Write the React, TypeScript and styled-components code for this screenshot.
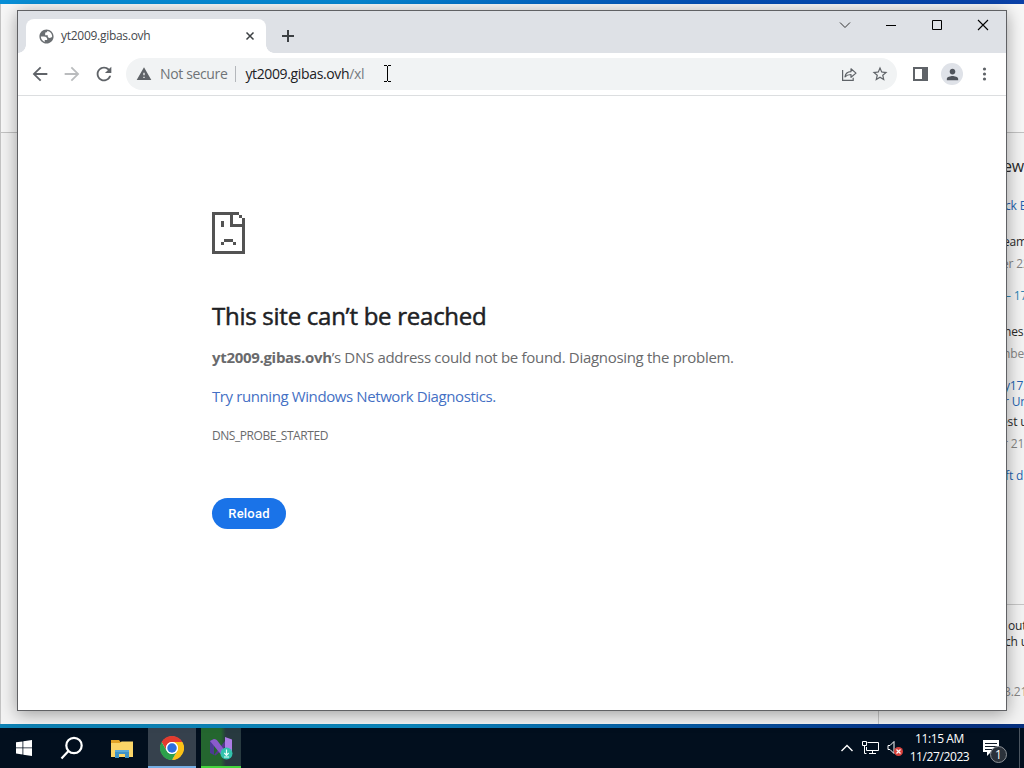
import React from 'react';
import styled, { createGlobalStyle } from 'styled-components';

const colors = {
  black: '#202124',
  grey: '#5f6368',
  textGrey: '#696a6c',
  link: '#4470c4',
  blue: '#1a73e8',
  frame: '#dee1e6',
  omnibox: '#f1f3f4',
  taskbar: '#020f1e',
};

const GlobalStyle = createGlobalStyle`
  * {
    box-sizing: border-box;
  }
  body {
    margin: 0;
    overflow: hidden;
    font-family: 'Open Sans', 'Noto Sans', sans-serif;
  }
  svg {
    display: block;
    flex-shrink: 0;
  }
`;

const Desktop = styled.div`
  position: relative;
  display: flex;
  flex-direction: column;
  width: 1024px;
  height: 768px;
  overflow: hidden;
`;

const TopEdge = styled.div`
  height: 4px;
  background: linear-gradient(90deg, #078ed6 0%, #0786d0 35%, #0468c2 52%, #0450b4 68%, #0a41a8 100%);
`;

const BottomEdge = styled.div`
  height: 4px;
  background: linear-gradient(90deg, #0e82b4 0%, #0c86bc 40%, #0655a0 70%, #07348a 88%, #06307e 100%);
`;

const BackWindow = styled.div`
  display: flex;
  flex: 1;
  flex-direction: column;
  min-height: 0;
  border-left: 1px solid #c4c4c4;
  background: #f3f3f3;
`;

const BackHeader = styled.div`
  height: 129px;
  border-bottom: 1px solid #c2c2c2;
  background: #f7f7f7;
`;

const BackBody = styled.div`
  display: flex;
  flex: 1;
  min-height: 0;
`;

const BackMain = styled.div`
  width: 878px;
  border-right: 1px solid #c6c6c6;
`;

const BackSide = styled.div`
  flex: 1;
  min-width: 0;
`;

const NewsItem = styled.div<{ gap: number; indent: number; tone: string; size?: number }>`
  height: 16px;
  margin-top: ${(props) => props.gap}px;
  padding-left: ${(props) => props.indent - 879}px;
  color: ${(props) => props.tone};
  font-size: ${(props) => props.size || 12}px;
  line-height: 16px;
  letter-spacing: -0.15px;
  white-space: nowrap;
`;

const NewsRule = styled.div`
  height: 1px;
  margin-top: 120px;
  background: #c6c6c6;
`;

const Browser = styled.div`
  position: absolute;
  top: 10px;
  left: 17px;
  display: flex;
  flex-direction: column;
  width: 990px;
  height: 701px;
  border: 1px solid #606164;
  background: #fff;
  box-shadow: 0 3px 16px rgba(0, 0, 0, 0.36);
`;

const TabStrip = styled.div`
  display: flex;
  height: 42px;
  padding: 8px 0 0 8px;
  background: ${colors.frame};
`;

const Tab = styled.div`
  position: relative;
  display: flex;
  align-items: center;
  width: 240px;
  height: 34px;
  padding: 0 11px 0 12px;
  border-radius: 8px 8px 0 0;
  background: #fff;

  &::before,
  &::after {
    content: '';
    position: absolute;
    bottom: 0;
    width: 8px;
    height: 8px;
  }
  &::before {
    left: -8px;
    background: radial-gradient(circle at 0 0, transparent 7.5px, #fff 8px);
  }
  &::after {
    right: -8px;
    background: radial-gradient(circle at 100% 0, transparent 7.5px, #fff 8px);
  }
`;

const TabTitle = styled.span`
  flex: 1;
  margin: 0 0 2px 6px;
  color: #45494d;
  font-size: 12px;
  letter-spacing: -0.28px;
`;

const NewTab = styled.div`
  display: flex;
  align-items: center;
  height: 34px;
  margin-left: 16px;
`;

const WindowControls = styled.div`
  display: flex;
  align-items: center;
  gap: 34px;
  height: 12px;
  margin: 0 17px 0 auto;
`;

const Toolbar = styled.div`
  display: flex;
  align-items: center;
  height: 43px;
  padding: 0 12px 0 11px;
  border-bottom: 1px solid #dcdee0;
`;

const NavButtons = styled.div`
  display: flex;
  gap: 10px;
`;

const Omnibox = styled.div`
  display: flex;
  align-items: center;
  width: 771px;
  height: 32px;
  margin-left: 11px;
  padding: 0 8px 0 10px;
  border-radius: 16px;
  background: ${colors.omnibox};
  font-size: 14px;
`;

const Security = styled.span`
  margin-left: 8px;
  padding-right: 8px;
  border-right: 1px solid #b4b7bb;
  color: #6f7377;
  line-height: 16px;
  letter-spacing: -0.36px;
`;

const Url = styled.span`
  flex: 1;
  margin: 0 0 1px 9px;
  color: ${colors.black};
  letter-spacing: -0.36px;

  span {
    color: #777b80;
  }
`;

const OmniboxActions = styled.div`
  display: flex;
  align-items: center;
  gap: 14px;
`;

const ToolbarActions = styled.div`
  display: flex;
  align-items: center;
  gap: 13px;
  margin-left: 16px;
`;

const Avatar = styled.div`
  display: flex;
  align-items: center;
  justify-content: center;
  width: 22px;
  height: 22px;
  border-radius: 50%;
  background: #dfe2e8;
`;

const ErrorPage = styled.div`
  padding: 116px 0 0 194px;
`;

const Title = styled.h1`
  margin: 46px 0 0;
  color: ${colors.black};
  font-size: 24px;
  font-weight: 400;
  line-height: 32px;
  letter-spacing: -0.26px;
  white-space: nowrap;
  -webkit-text-stroke: 0.5px ${colors.black};
`;

const Message = styled.p`
  margin: 15px 0 0;
  color: ${colors.textGrey};
  font-size: 15px;
  line-height: 20px;
  letter-spacing: -0.31px;
  white-space: nowrap;
`;

const Diagnose = styled.a`
  display: block;
  margin-top: 19px;
  color: ${colors.link};
  font-size: 15px;
  line-height: 20px;
  letter-spacing: -0.4px;
`;

const ErrorCode = styled.div`
  margin-top: 22px;
  color: ${colors.textGrey};
  font-size: 12px;
  line-height: 16px;
  letter-spacing: -0.44px;
`;

const ReloadButton = styled.button`
  width: 74px;
  height: 31px;
  margin-top: 54px;
  padding: 0;
  border: 0;
  border-radius: 16px;
  color: #fff;
  background: ${colors.blue};
  font: 500 13px Roboto, sans-serif;
  letter-spacing: 0.2px;
`;

const Cursor = styled.svg`
  position: absolute;
  top: 65px;
  left: 383px;
`;

const Taskbar = styled.div`
  display: flex;
  height: 40px;
  background: ${colors.taskbar};
  color: #fff;
`;

const TaskButton = styled.div<{ width?: number; fill?: string; line?: string }>`
  display: flex;
  align-items: center;
  justify-content: center;
  width: ${(props) => props.width || 48}px;
  height: 40px;
  background: ${(props) => props.fill || 'none'};
  box-shadow: ${(props) => (props.line ? `inset 0 -2px ${props.line}` : 'none')};
`;

const RunningGroup = styled.div`
  display: flex;
  gap: 5px;
`;

const Tray = styled.div`
  display: flex;
  align-items: center;
  margin-left: auto;
`;

const Clock = styled.div`
  width: 71px;
  font-size: 12px;
  line-height: 18px;
  letter-spacing: -0.4px;
  text-align: center;
  white-space: nowrap;
`;

const TrayIcons = styled.div`
  display: flex;
  align-items: center;
  gap: 8px;
`;

const Notifications = styled.div`
  position: relative;
  width: 25px;
  height: 40px;
  margin-left: 8px;
  padding-top: 12px;
`;

const Badge = styled.div`
  position: absolute;
  top: 18px;
  left: 7px;
  width: 17px;
  height: 17px;
  border: 1px solid #8d9298;
  border-radius: 50%;
  background: #2b323b;
  font-size: 12px;
  line-height: 15px;
  text-align: center;
`;

const ShowDesktop = styled.div`
  width: 5px;
  height: 40px;
  margin-left: 11px;
  border-left: 1px solid #4b5560;
`;

const news = [
  { text: 'ew', gap: 25, indent: 1003, tone: '#2a2a2a', size: 16 },
  { text: 'ck E', gap: 24, indent: 1005, tone: '#2463b0' },
  { text: 'eam', gap: 20, indent: 1003, tone: '#2a2a2a' },
  { text: 'er 22', gap: 6, indent: 1002, tone: '#858585' },
  { text: '– 17', gap: 16, indent: 1005, tone: '#2f86b4' },
  { text: 'nes', gap: 20, indent: 1004, tone: '#2a2a2a' },
  { text: 'nber', gap: 6, indent: 1003, tone: '#858585' },
  { text: 'y17.', gap: 16, indent: 1004, tone: '#2463b0' },
  { text: 'r Un', gap: 0, indent: 1004, tone: '#2463b0' },
  { text: 'est u', gap: 4, indent: 1001, tone: '#2a2a2a' },
  { text: 'r 21', gap: 6, indent: 1003, tone: '#858585' },
  { text: 'ft d', gap: 16, indent: 1005, tone: '#2463b0' },
];

const notes = [
  { text: 'out', gap: 13, indent: 1008, tone: '#2a2a2a' },
  { text: 'ch u', gap: 0, indent: 1005, tone: '#2a2a2a' },
  { text: '3.21', gap: 34, indent: 1004, tone: '#858585' },
];

const MaterialIcon = ({ d, size, color = colors.grey }: { d: string; size: number; color?: string }) => (
  <svg width={size} height={size} viewBox="0 0 24 24" fill={color}>
    <path d={d} />
  </svg>
);

const paths = {
  globe:
    'M12 2C6.48 2 2 6.48 2 12s4.48 10 10 10 10-4.48 10-10S17.52 2 12 2zM4 12h4.400c3.400 0 4.900 1.700 4.600 5.100H9.500v2.500C6.300 18.500 4 15.500 4 12zm16 0c-.9 1.400-2 2-3.300 2-2.400 0-3.200-1.300-2.900-3.800h-3.700V8.100c0-1.700.9-2.200 2.800-2V4.200C16.800 4.600 20 7.900 20 12z',
  back: 'M20 11H7.830l5.590-5.590L12 4l-8 8 8 8 1.410-1.410L7.830 13H20v-2z',
  forward: 'M12 4l-1.410 1.410L16.170 11H4v2h12.170l-5.580 5.590L12 20l8-8z',
  refresh:
    'M17.650 6.350C16.200 4.900 14.210 4 12 4c-4.420 0-7.990 3.580-7.990 8s3.570 8 7.990 8c3.730 0 6.840-2.550 7.730-6h-2.080c-.82 2.330-3.040 4-5.650 4-3.310 0-6-2.690-6-6s2.690-6 6-6c1.660 0 3.140.69 4.220 1.780L13 11h7V4l-2.350 2.350z',
  warning: 'M1 21h22L12 2 1 21zm12-3h-2v-2h2v2zm0-4h-2v-4h2v4z',
  star: 'M22 9.240l-7.190-.62L12 2 9.190 8.630 2 9.240l5.460 4.730L5.820 21 12 17.270 18.180 21l-1.630-7.030L22 9.240zM12 15.400l-3.760 2.270 1-4.280-3.320-2.880 4.380-.38L12 6.100l1.710 4.040 4.380.38-3.320 2.880 1 4.280L12 15.400z',
  person: 'M12 12c2.210 0 4-1.790 4-4s-1.790-4-4-4-4 1.790-4 4 1.790 4 4 4zm0 2c-2.670 0-8 1.340-8 4v2h16v-2c0-2.660-5.330-4-8-4z',
};

const ShareIcon = () => (
  <svg width="16" height="16" viewBox="0 0 16 16" fill="none" stroke={colors.grey} strokeWidth="1.200">
    <path d="M1.600 4v10.400h10.600v-2.600" />
    <path d="M4 10.900c.5-3.700 2.800-5.200 6-5.300V2.800l5 4.300-5 4.200V8.500c-2.600 0-4.500.7-6 2.400z" strokeLinejoin="round" />
  </svg>
);

const SadPage = () => (
  <svg width="33" height="42" viewBox="0 0 11 14" fill="#535353" shapeRendering="crispEdges">
    <path d="M0 0h9v1H7v3h3v-2h1v12H0V0zM1 1v12h9V5H6V1H1z" />
    <path d="M9 1h1v1H9zM3 3h1v2H3zM4 9h3v1H4zM3 10h1v1H3zM7 10h1v1H7z" />
  </svg>
);

const ChromeLogo = () => (
  <svg width="24" height="24" viewBox="0 0 48 48">
    <circle cx="24" cy="24" r="23" fill="#fff" />
    <path d="M3.200 12A24 24 0 0 1 44.800 12H24a12 12 0 0 0-10.400 18z" fill="#e33b2e" />
    <path d="M44.800 12A24 24 0 0 1 24 48L34.400 30A12 12 0 0 0 24 12z" fill="#fbc116" />
    <path d="M24 48A24 24 0 0 1 3.200 12L13.600 30A12 12 0 0 0 34.400 30z" fill="#2da04b" />
    <circle cx="24" cy="24" r="12" fill="#fff" />
    <circle cx="24" cy="24" r="9.500" fill="#2c6fdf" />
  </svg>
);

const FolderIcon = () => (
  <svg width="22" height="19" viewBox="0 0 22 19">
    <path d="M0 1h8l1.500 2H22v4H0z" fill="#e2a428" />
    <path d="M0 4h9l1.500-1.500H22V18H0z" fill="#fbd568" />
    <path d="M4 19v-8h14v8h-4v-4H8v4z" fill="#3f93c8" />
    <path d="M4 11h14v2H4z" fill="#5aa9d8" />
  </svg>
);

const StudioIcon = () => (
  <svg width="24" height="24" viewBox="0 0 24 24">
    <path d="M1 5l4-2v16l-4-2z" fill="#4b3a94" />
    <path d="M5 19L16 5v6L6.500 19.500z" fill="#54388f" />
    <path d="M1 5l4-2c2 0 3 1 4 2.500l9 12V23c-2 0-3-.5-4-2z" fill="#8a5bcb" />
    <path d="M16 1l7 2.500v15L16 22z" fill="#ad7ce6" />
    <circle cx="17.500" cy="17.500" r="6" fill="#32c2ac" />
    <path d="M17.500 13.500v6M15.300 17l2.200 2.300 2.200-2.300M15 21h5" stroke="#e7fffb" strokeWidth="1.200" fill="none" />
  </svg>
);

const App = () => (
  <>
    <GlobalStyle />
    <Desktop>
      <TopEdge />
      <BackWindow>
        <BackHeader />
        <BackBody>
          <BackMain />
          <BackSide>
            {news.map((item) => (
              <NewsItem key={item.text} gap={item.gap} indent={item.indent} tone={item.tone} size={item.size}>
                {item.text}
              </NewsItem>
            ))}
            <NewsRule />
            {notes.map((item) => (
              <NewsItem key={item.text} gap={item.gap} indent={item.indent} tone={item.tone}>
                {item.text}
              </NewsItem>
            ))}
          </BackSide>
        </BackBody>
      </BackWindow>
      <BottomEdge />

      <Taskbar>
        <TaskButton>
          <svg width="16" height="16" viewBox="0 0 16 16" fill="#fff">
            <path d="M0 2.300l6.500-.9v6.100H0zM7.300 1.300L16 0v7.500H7.300zM0 8.300h6.500v6.200L0 13.600zM7.300 8.300H16V16l-8.700-1.300z" />
          </svg>
        </TaskButton>
        <TaskButton>
          <svg width="24" height="24" viewBox="0 0 24 24" fill="none" stroke="#fff" strokeWidth="2.200">
            <circle cx="14" cy="9.500" r="7.700" />
            <path d="M8.500 15L1.500 22.500" />
          </svg>
        </TaskButton>
        <TaskButton width={52}>
          <FolderIcon />
        </TaskButton>
        <RunningGroup>
          <TaskButton fill="#36414d" line="#76aee4">
            <ChromeLogo />
          </TaskButton>
          <TaskButton width={40} fill="linear-gradient(90deg, #24662f 50%, #283a40 62%)" line="#44d63c">
            <StudioIcon />
          </TaskButton>
        </RunningGroup>
        <Tray>
          <TrayIcons>
            <svg width="14" height="8" viewBox="0 0 14 8" fill="none" stroke="#fff" strokeWidth="1.400">
              <path d="M1.500 7L7 1.500 12.500 7" />
            </svg>
            <svg width="17" height="14" viewBox="0 0 17 14" fill="none" stroke="#fff">
              <path d="M5.500 1.500h11v8h-12V6M10.500 9.500v3M7 12.500h7M.5.500h4v4h-4zM2.500 4.500v8h2" />
            </svg>
            <svg width="17" height="16" viewBox="0 0 17 16" fill="none">
              <path d="M1 5.500h2l4-4v12l-4-4H1z" stroke="#fff" />
              <circle cx="11.500" cy="11.500" r="4.500" fill="#d8413c" />
              <path d="M9.500 9.500l4 4M13.500 9.500l-4 4" stroke="#fff" strokeWidth="1.200" />
            </svg>
          </TrayIcons>
          <Clock>
            11:15 AM
            <br />
            11/27/2023
          </Clock>
          <Notifications>
            <svg width="16" height="16" viewBox="0 0 16 16">
              <path d="M0 0h16v12H8l-4 4v-4H0z" fill="#fff" />
              <path d="M2 3.500h12M2 6.500h12M2 9.500h7" stroke="#111c29" />
            </svg>
            <Badge>1</Badge>
          </Notifications>
          <ShowDesktop />
        </Tray>
      </Taskbar>

      <Browser>
        <TabStrip>
          <Tab>
            <MaterialIcon d={paths.globe} size={17} color="#6b6f73" />
            <TabTitle>yt2009.gibas.ovh</TabTitle>
            <svg width="10" height="10" viewBox="0 0 10 10" stroke="#3c4043" strokeWidth="1.500">
              <path d="M1.500 1.500l7 7M8.500 1.500l-7 7" />
            </svg>
          </Tab>
          <NewTab>
            <svg width="12" height="12" viewBox="0 0 12 12" stroke="#3c4043" strokeWidth="2">
              <path d="M6 0v12M0 6h12" />
            </svg>
          </NewTab>
          <WindowControls>
            <svg width="12" height="12" viewBox="0 0 12 12" fill="none" stroke="#333">
              <path d="M1 3.500l5 5 5-5" />
            </svg>
            <svg width="12" height="12" viewBox="0 0 12 12" stroke="#000">
              <path d="M1 6.500h10" />
            </svg>
            <svg width="12" height="12" viewBox="0 0 12 12" fill="none" stroke="#000">
              <path d="M1.500 1.500h9v9h-9z" />
            </svg>
            <svg width="12" height="12" viewBox="0 0 12 12" stroke="#000" strokeWidth="1.100">
              <path d="M1 1l10 10M11 1L1 11" />
            </svg>
          </WindowControls>
        </TabStrip>
        <Toolbar>
          <NavButtons>
            <MaterialIcon d={paths.back} size={22} />
            <MaterialIcon d={paths.forward} size={22} color="#babcbe" />
            <MaterialIcon d={paths.refresh} size={22} />
          </NavButtons>
          <Omnibox>
            <MaterialIcon d={paths.warning} size={16} />
            <Security>Not secure</Security>
            <Url>
              yt2009.gibas.ovh<span>/xl</span>
            </Url>
            <OmniboxActions>
              <ShareIcon />
              <MaterialIcon d={paths.star} size={18} />
            </OmniboxActions>
          </Omnibox>
          <ToolbarActions>
            <svg width="15" height="14" viewBox="0 0 15 14">
              <path d="M0 0h15v14H0zM2 2v10h7V2z" fill={colors.grey} fillRule="evenodd" />
            </svg>
            <Avatar>
              <MaterialIcon d={paths.person} size={17} color="#50545b" />
            </Avatar>
            <svg width="18" height="14" viewBox="0 0 18 14" fill={colors.grey}>
              <circle cx="8.500" cy="2" r="1.600" />
              <circle cx="8.500" cy="7" r="1.600" />
              <circle cx="8.500" cy="12" r="1.600" />
            </svg>
          </ToolbarActions>
        </Toolbar>
        <ErrorPage>
          <SadPage />
          <Title>This site can’t be reached</Title>
          <Message>
            <b>yt2009.gibas.ovh</b>’s DNS address could not be found. Diagnosing the problem.
          </Message>
          <Diagnose>Try running Windows Network Diagnostics.</Diagnose>
          <ErrorCode>DNS_PROBE_STARTED</ErrorCode>
          <ReloadButton>Reload</ReloadButton>
        </ErrorPage>
      </Browser>

      <Cursor width="9" height="17" viewBox="0 0 9 17" fill="none" stroke="#000" shapeRendering="crispEdges">
        <path d="M1 .5h3M5 .5h3M4.500 1v15M1 16.500h3M5 16.500h3" />
      </Cursor>
    </Desktop>
  </>
);

export default App;
